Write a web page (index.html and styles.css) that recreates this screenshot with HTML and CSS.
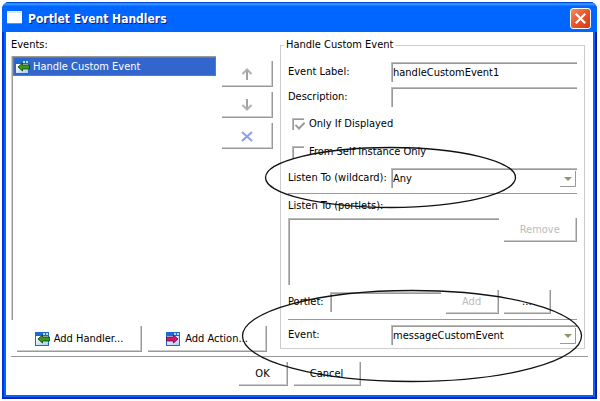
FILE: index.html
```
<!DOCTYPE html>
<html lang="en">
<head>
<meta charset="utf-8">
<title>Portlet Event Handlers</title>
<link rel="stylesheet" href="styles.css">
</head>
<body>
<svg class="defs" aria-hidden="true">
  <defs>
    <linearGradient id="win" x1="0" y1="0" x2="1" y2="1">
      <stop offset="0" stop-color="#ffffff"/>
      <stop offset="1" stop-color="#a8cdf5"/>
    </linearGradient>
    <symbol id="window" viewBox="0 0 15 15">
      <rect x="0" y="1" width="14" height="14" fill="#1c6ad0"/>
      <rect x="1" y="5" width="12" height="9" fill="url(#win)"/>
      <path d="M8 2h2v2h-2zM11 2h2v2h-2z" fill="#b9dcff"/>
    </symbol>
    <symbol id="handler" viewBox="0 0 15 15">
      <use href="#window" width="15" height="15"/>
      <path d="M3 8L7.500 4V6H14.500V10H7.500V12Z" fill="#38981a" stroke="#143c08" stroke-width=".8"/>
    </symbol>
    <symbol id="action" viewBox="0 0 15 15">
      <use href="#window" width="15" height="15"/>
      <path d="M12 8L7.500 4V6H.5V10H7.500V12Z" fill="#d8127a" stroke="#5d0a38" stroke-width=".8"/>
    </symbol>
  </defs>
</svg>
<div class="window">
  <header class="titlebar">
    <svg class="app-icon" viewBox="0 0 16 14" aria-hidden="true"><rect width="15" height="12" fill="#fff"/><path d="M0 0H15V2H0Z" fill="#d8ecff"/><path d="M0 12H15V13H0Z" fill="#38a0ff"/></svg>
    <h1>Portlet Event Handlers</h1>
    <button class="close" aria-label="Close"><svg viewBox="0 0 20 20" aria-hidden="true"><path d="M5 5L15 15M15 5L5 15" stroke="#fff" stroke-width="2.500"/></svg></button>
  </header>
  <main>
    <section class="events">
      <h2>Events:</h2>
      <div class="event-body">
        <ul class="event-list">
          <li><svg class="icon" aria-hidden="true"><use href="#handler"/></svg>Handle Custom Event</li>
        </ul>
        <div class="order">
          <button class="btn" aria-label="Move up"><svg viewBox="0 0 12 12" aria-hidden="true"><path d="M6 12V3" stroke="#9aa89a" stroke-width="2"/><path d="M1.500 6L6 1.500L10.500 6" fill="none" stroke="#b0b0b0" stroke-width="2"/></svg></button>
          <button class="btn" aria-label="Move down"><svg viewBox="0 0 12 12" aria-hidden="true"><path d="M6 0V9" stroke="#9aa89a" stroke-width="2"/><path d="M1.500 6L6 10.500L10.500 6" fill="none" stroke="#b0b0b0" stroke-width="2"/></svg></button>
          <button class="btn" aria-label="Delete"><svg viewBox="0 0 12 12" aria-hidden="true"><path d="M1 2L11 11" stroke="#8f9ef0" stroke-width="2"/><path d="M11 2L1 11" stroke="#8f9ae8" stroke-width="2"/></svg></button>
        </div>
      </div>
      <div class="adders">
        <button class="btn"><svg class="icon" aria-hidden="true"><use href="#handler"/></svg>Add Handler...</button>
        <button class="btn"><svg class="icon" aria-hidden="true"><use href="#action"/></svg>Add Action...</button>
      </div>
    </section>
    <fieldset>
      <legend>Handle Custom Event</legend>
      <div class="form">
        <div class="row"><label for="label">Event Label:</label><input class="field" id="label" type="text" value="handleCustomEvent1"></div>
        <div class="row"><label for="desc">Description:</label><input class="field" id="desc" type="text"></div>
        <label class="check"><input type="checkbox" checked>Only If Displayed</label>
        <label class="check"><input type="checkbox">From Self Instance Only</label>
        <div class="row"><label for="wild">Listen To (wildcard):</label><div class="combo"><select class="field" id="wild"><option>Any</option></select><svg class="drop" viewBox="0 0 16 16" aria-hidden="true"><path d="M0 15.500H15.500V0" fill="none" stroke="#999"/><path d="M4 6H12L8 10Z" fill="#98936b"/></svg></div></div>
        <hr>
        <label for="portlets">Listen To (portlets):</label>
        <div class="portlets"><select class="field" id="portlets" size="4"></select><button class="btn remove" disabled>Remove</button></div>
        <div class="portlet-row"><label for="portlet">Portlet:</label><input class="field" id="portlet" type="text"><button class="btn" disabled>Add</button><button class="btn">...</button></div>
        <hr>
        <div class="row"><label for="event">Event:</label><div class="combo"><select class="field" id="event"><option>messageCustomEvent</option></select><svg class="drop" viewBox="0 0 16 16" aria-hidden="true"><path d="M0 15.500H15.500V0" fill="none" stroke="#999"/><path d="M4 6H12L8 10Z" fill="#98936b"/></svg></div></div>
      </div>
    </fieldset>
  </main>
  <footer>
    <button class="btn ok">OK</button>
    <button class="btn cancel">Cancel</button>
  </footer>
  <svg class="callouts" viewBox="0 0 595 396" aria-hidden="true">
    <ellipse cx="388.500" cy="175.500" rx="125" ry="30"/>
    <ellipse cx="410" cy="334" rx="169.500" ry="45.500"/>
  </svg>
</div>
</body>
</html>
```
FILE: styles.css
```
* { box-sizing: border-box; }
body {
  margin: 0;
  padding: 2px 3px 3px 2px;
  background: #fff;
  color: #000;
  font: 11px/14px "DejaVu Sans Condensed", Tahoma, sans-serif;
}
button, input, select { font: inherit; color: inherit; margin: 0; }
.defs { position: absolute; width: 0; height: 0; }

.window {
  position: relative;
  background: #06f;
  border: solid #0033e0;
  border-width: 0 2px 2px;
  border-right-color: #00138c;
  border-bottom-color: #0022b8;
  border-radius: 7px 7px 0 0;
  padding: 0 2px 2px;
}
.titlebar {
  display: flex;
  align-items: center;
  height: 30px;
  margin: 0 -4px;
  padding: 3px 6px 0 5px;
  background: linear-gradient(#0046d8 0 1px, #2b90ff 1px 3px, #06f 4px);
  border-radius: 7px 7px 0 0;
}
.app-icon { width: 16px; height: 14px; margin-bottom: 2px; }
h1 {
  flex: 1;
  margin: 0 0 0 5px;
  color: #fff;
  font: bold 12px/16px "DejaVu Sans Condensed", "Trebuchet MS", sans-serif;
  text-shadow: 1px 1px #0a1f80;
}
.close {
  width: 21px;
  height: 21px;
  padding: 0;
  border: 1px solid #fff;
  border-radius: 3px;
  background: linear-gradient(135deg, #f0906c, #e8532a 50%, #d03c10);
}
.close svg { display: block; width: 19px; height: 19px; }

main {
  display: grid;
  grid-template-columns: 262fr 305fr;
  gap: 7px;
  padding: 6px 8px 4px 5px;
  background: #fff;
}
.events { min-width: 0; display: flex; flex-direction: column; }
h2 { margin: 0 0 4px; font: inherit; }
.event-body { flex: 1; display: flex; gap: 6px; }
.event-list {
  flex: 1;
  margin: 0 0 0 1px;
  padding: 0;
  list-style: none;
  border: solid #999;
  border-width: 1px 0 0 1px;
  box-shadow: -1px 0 #ccc;
}
.event-list li {
  display: flex;
  align-items: center;
  gap: 3px;
  height: 19px;
  padding-left: 1px;
  background: #36c;
  border: 1px solid #2f8ad8;
  color: #fff;
}
.icon { width: 15px; height: 15px; flex: none; }
.order { width: 51px; padding-top: 5px; display: flex; flex-direction: column; gap: 5px; }
.order svg { width: 12px; height: 12px; }
.btn {
  display: flex;
  align-items: center;
  justify-content: center;
  height: 26px;
  padding: 0;
  background: #fff;
  border: solid #999;
  border-width: 0 1px 1px 0;
  box-shadow: inset -1px -1px #ccc;
}
.btn:disabled { color: #bbb; }
.adders {
  display: grid;
  grid-template-columns: 125fr 119fr;
  gap: 6px;
  margin: 6px 6px 0;
}
.adders .btn { gap: 4px; }

fieldset {
  min-width: 0;
  margin: 0 0 3px;
  padding: 10px 7px 3px;
  border: 1px solid #ccc;
}
legend { margin-left: -4px; padding: 0 2px; }
.form { display: flex; flex-direction: column; gap: 5px; }
.row { display: grid; grid-template-columns: 103fr 186fr; align-items: center; }
.field {
  width: 100%;
  height: 20px;
  padding: 0 0 0 1px;
  background: #fff;
  border: solid #bbb;
  border-width: 1px 0 0 1px;
  box-shadow: inset 1px 1px #999;
  border-radius: 0;
  appearance: none;
  outline: 0;
}
.check { display: flex; align-items: center; gap: 5px; height: 23px; padding-left: 4px; }
.check input {
  width: 12px;
  height: 12px;
  background: #fff;
  border: solid #bbb;
  border-width: 1px 0 0 1px;
  box-shadow: inset 1px 1px #999;
  appearance: none;
}
.check input:checked::after {
  content: "";
  display: block;
  width: 4px;
  height: 7px;
  margin: 1px 0 0 4px;
  border: solid #999;
  border-width: 0 2px 2px 0;
  transform: rotate(45deg);
}
.combo { position: relative; display: flex; }
.drop { position: absolute; right: 1px; bottom: 1px; width: 16px; height: 16px; pointer-events: none; }
hr { width: 100%; height: 1px; margin: 0; border: 0; background: #999; }
.portlets { display: flex; gap: 5px; }
.portlets .field { flex: 210; height: 67px; overflow: hidden; }
.remove { flex: 73; height: 24px; }
.portlet-row { display: grid; grid-template-columns: 42fr 110fr 58fr 52fr 26fr; align-items: center; }
.portlet-row .btn { height: 24px; margin-left: 5px; }

footer {
  display: flex;
  justify-content: center;
  gap: 6px;
  padding: 6px 6px 9px;
  background: linear-gradient(#999, #999) 5px 0 / calc(100% - 10px) 1px no-repeat #fff;
}
footer .btn { height: 24px; }
.ok { width: 49px; }
.cancel { width: 67px; }
.callouts {
  position: absolute;
  inset: 0 -2px -2px;
  fill: none;
  stroke: #111;
  stroke-width: 1.300px;
  pointer-events: none;
}
```
